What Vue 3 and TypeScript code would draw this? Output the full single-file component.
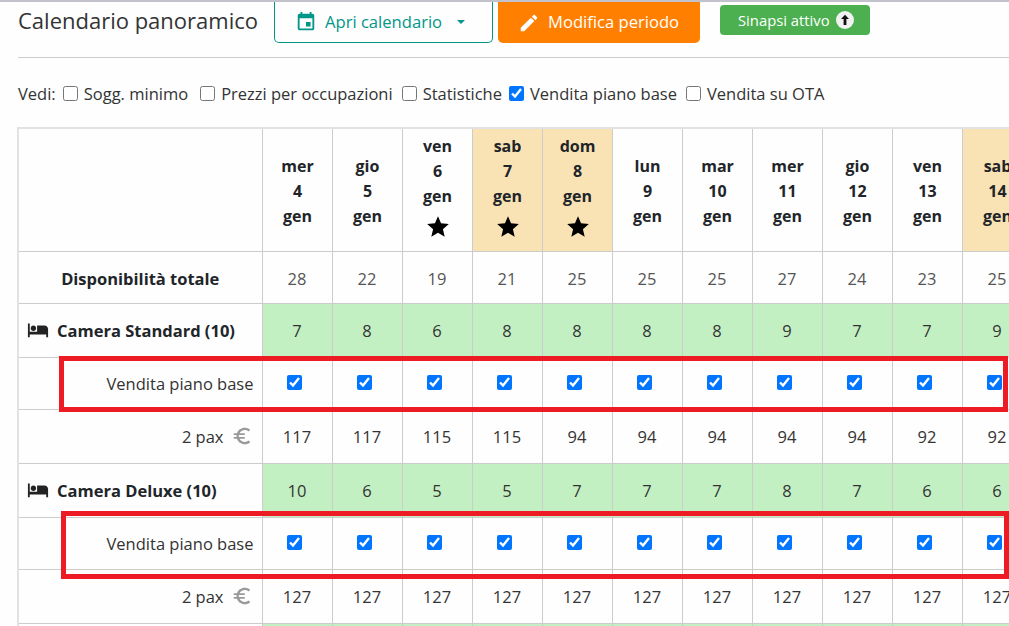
<script setup lang="ts">
interface Day {
  name: string
  num: number
  weekend?: boolean
  star?: boolean
}

interface Room {
  name: string
  avail: number[]
  prices: number[]
}

const days: Day[] = [
  { name: 'mer', num: 4 },
  { name: 'gio', num: 5 },
  { name: 'ven', num: 6, star: true },
  { name: 'sab', num: 7, weekend: true, star: true },
  { name: 'dom', num: 8, weekend: true, star: true },
  { name: 'lun', num: 9 },
  { name: 'mar', num: 10 },
  { name: 'mer', num: 11 },
  { name: 'gio', num: 12 },
  { name: 'ven', num: 13 },
  { name: 'sab', num: 14, weekend: true },
]

const total = [28, 22, 19, 21, 25, 25, 25, 27, 24, 23, 25]

const rooms: Room[] = [
  {
    name: 'Camera Standard (10)',
    avail: [7, 8, 6, 8, 8, 8, 8, 9, 7, 7, 9],
    prices: [117, 117, 115, 115, 94, 94, 94, 94, 94, 92, 92],
  },
  {
    name: 'Camera Deluxe (10)',
    avail: [10, 6, 5, 5, 7, 7, 7, 8, 7, 6, 6],
    prices: [127, 127, 127, 127, 127, 127, 127, 127, 127, 127, 127],
  },
]

const filters = [
  { label: 'Sogg. minimo', on: false },
  { label: 'Prezzi per occupazioni', on: false },
  { label: 'Statistiche', on: false },
  { label: 'Vendita piano base', on: true },
  { label: 'Vendita su OTA', on: false },
]
</script>

<template>
  <div class="page">
    <header class="top">
      <h1 class="title">Calendario panoramico</h1>
      <button class="btn btn-outline" type="button">
        <svg class="ico" viewBox="0 0 24 24"><path d="M17 12h-5v5h5v-5zM16 1v2H8V1H6v2H5c-1.11 0-1.99.9-1.99 2L3 19c0 1.1.89 2 2 2h14c1.1 0 2-.9 2-2V5c0-1.1-.9-2-2-2h-1V1h-2zm3 18H5V8h14v11z" /></svg>
        <span>Apri calendario</span>
        <i class="caret"></i>
      </button>
      <button class="btn btn-orange" type="button">
        <svg class="ico" viewBox="0 0 24 24"><path d="M3 17.25V21h3.75L17.81 9.94l-3.75-3.75L3 17.25zM20.71 7.04c.39-.39.39-1.02 0-1.41l-2.34-2.34c-.39-.39-1.02-.39-1.41 0l-1.83 1.83 3.75 3.75 1.83-1.83z" /></svg>
        <span>Modifica periodo</span>
      </button>
      <button class="btn-sync" type="button">
        <span>Sinapsi attivo</span>
        <svg class="sync-ico" viewBox="0 0 18 18">
          <circle cx="9" cy="9" r="9" fill="#f1f1f1" />
          <path d="M9 3.8 13 8h-2.6v6H7.6V8H5z" fill="#111" />
        </svg>
      </button>
    </header>

    <div class="filters">
      <span class="filters-label">Vedi:</span>
      <label v-for="f in filters" :key="f.label" class="filter">
        <input type="checkbox" :checked="f.on" />
        <span>{{ f.label }}</span>
      </label>
    </div>

    <div class="grid-wrap">
      <table class="grid">
        <colgroup>
          <col class="col-label" />
          <col v-for="d in days" :key="d.num" class="col-day" />
        </colgroup>
        <thead>
          <tr class="row-head">
            <th></th>
            <th v-for="d in days" :key="d.num" :class="{ weekend: d.weekend }">
              <div>{{ d.name }}</div>
              <div>{{ d.num }}</div>
              <div>gen</div>
              <svg v-if="d.star" class="star" viewBox="0 0 24 24"><path d="M12 17.27 18.18 21l-1.64-7.03L22 9.24l-7.19-.61L12 2 9.19 8.63 2 9.24l5.46 4.73L5.82 21z" /></svg>
            </th>
          </tr>
        </thead>
        <tbody>
          <tr class="row-total">
            <th class="center">Disponibilità totale</th>
            <td v-for="(n, i) in total" :key="i">{{ n }}</td>
          </tr>
          <template v-for="room in rooms" :key="room.name">
            <tr class="row-room">
              <th class="room-name">
                <span class="room-inner">
                  <svg class="bed" viewBox="0 0 24 24"><path d="M7 13c1.66 0 3-1.34 3-3S8.66 7 7 7s-3 1.34-3 3 1.34 3 3 3zm12-6h-8v7H3V5H1v15h2v-3h18v3h2v-9c0-2.21-1.79-4-4-4z" /></svg>
                  {{ room.name }}
                </span>
              </th>
              <td v-for="(n, i) in room.avail" :key="i" class="free">{{ n }}</td>
            </tr>
            <tr class="row-check">
              <td class="label">Vendita piano base</td>
              <td v-for="d in days" :key="d.num"><input type="checkbox" checked /></td>
            </tr>
            <tr class="row-price">
              <td class="label">
                <span class="pax">
                  2 pax
                  <svg class="euro" viewBox="0 0 24 24"><path d="M15 18.5c-2.51 0-4.68-1.42-5.76-3.5H15v-2H8.58c-.05-.33-.08-.66-.08-1s.03-.67.08-1H15V9H9.24C10.32 6.92 12.5 5.5 15 5.5c1.61 0 3.09.59 4.23 1.57L21 5.3C19.41 3.87 17.3 3 15 3c-3.92 0-7.24 2.51-8.48 6H3v2h3.06c-.04.33-.06.66-.06 1 0 .34.02.67.06 1H3v2h3.52c1.24 3.49 4.56 6 8.48 6 2.31 0 4.41-.87 6-2.3l-1.78-1.77c-1.13.98-2.6 1.57-4.22 1.57z" /></svg>
                </span>
              </td>
              <td v-for="(n, i) in room.prices" :key="i">{{ n }}</td>
            </tr>
          </template>
          <tr class="row-room">
            <th></th>
            <td v-for="d in days" :key="d.num" class="free"></td>
          </tr>
        </tbody>
      </table>
    </div>

    <div class="mark mark-a"></div>
    <div class="mark mark-b"></div>
  </div>
</template>

<style>
html,
body {
  overflow: hidden;
  background: #fff;
}
</style>

<style scoped>
.page {
  position: relative;
  width: 1009px;
  height: 626px;
  overflow: hidden;
  box-sizing: border-box;
  border-top: 2px solid #c2c2cc;
  background: #fefefe;
  color: #333;
  font-family: "Open Sans", "Noto Sans", "Liberation Sans", sans-serif;
  font-size: 16.5px;
}

.top {
  display: flex;
  align-items: flex-start;
  height: 55px;
  margin-left: 18px;
  border-bottom: 1px solid #ccc;
}

.title {
  width: 256px;
  margin: 3px 0 0;
  font-size: 22px;
  font-weight: 400;
  line-height: 30px;
  white-space: nowrap;
}

.btn {
  display: flex;
  align-items: center;
  box-sizing: border-box;
  height: 41px;
  border: 0;
  border-radius: 0 0 5px 5px;
  font-family: inherit;
  font-size: 16.6px;
  padding: 0;
}

.btn span {
  margin-bottom: 2px;
}

.ico {
  width: 22px;
  height: 22px;
  fill: currentColor;
  flex: none;
}

.btn-outline {
  width: 219px;
  padding-left: 20px;
  border: 1px solid #009688;
  border-top: 0;
  background: transparent;
  color: #009688;
}

.btn-outline span {
  margin-left: 8px;
}

.caret {
  width: 0;
  height: 0;
  margin-left: 15px;
  border: 4px solid transparent;
  border-top-color: #009688;
  border-bottom: 0;
}

.btn-orange {
  width: 202px;
  margin-left: 5px;
  padding-left: 20px;
  background: #ff8000;
  color: #fff;
}

.btn-orange span {
  margin-left: 8px;
}

.btn-sync {
  display: flex;
  align-items: center;
  box-sizing: border-box;
  width: 150px;
  height: 30px;
  margin: 3px 0 0 20px;
  padding: 0 0 0 18px;
  border: 0;
  border-radius: 4px;
  background: #4caf50;
  color: #fff;
  font-family: inherit;
  font-size: 14.8px;
}

.sync-ico {
  width: 18px;
  height: 18px;
  margin-left: 6px;
}

.filters {
  display: flex;
  align-items: center;
  gap: 9px;
  height: 26px;
  margin: 22px 0 21px 18px;
  white-space: nowrap;
}

.filters-label {
  margin-right: -2px;
}

.filter {
  display: flex;
  align-items: center;
  gap: 6px;
}

.filter:nth-of-type(1) {
  margin-right: 3px;
}

.filter:nth-of-type(3) {
  margin-right: -2px;
}

.filter input {
  width: 15px;
  height: 15px;
  margin: 0;
}

.grid-wrap {
  margin-left: 17px;
  width: 992px;
  overflow: hidden;
}

.grid {
  table-layout: fixed;
  width: 1015px;
  border-collapse: collapse;
  border-top: 2px solid #e2e2e2;
  border-left: 2px solid #e2e2e2;
}

.col-label {
  width: 244px;
}

.col-day {
  width: 70px;
}

th,
td {
  padding: 0;
  border: 1px solid #ccc;
  text-align: center;
}

th {
  color: #212529;
  font-weight: 700;
}

.row-head {
  height: 123px;
}

.row-head th {
  padding: 4px 0 0 1px;
  font-size: 16px;
  line-height: 25px;
  vertical-align: middle;
}

.weekend {
  background: #f9e3b5;
}

.star {
  display: block;
  width: 26px;
  height: 26px;
  margin: 5px auto 10px;
  fill: #000;
}

.row-total {
  height: 52px;
}

.row-total th,
.row-total td {
  padding-top: 2px;
}

.row-total td {
  color: #555;
}

.row-room {
  height: 54px;
}

.row-check {
  height: 52px;
}

.row-price {
  height: 54px;
}

.room-name {
  text-align: left;
}

.room-inner {
  display: flex;
  align-items: center;
  gap: 8px;
  padding-left: 8px;
}

.bed {
  width: 22px;
  height: 22px;
  fill: #222;
  flex: none;
}

.free {
  background: #c3f0c3;
}

.label {
  padding-right: 8px;
  text-align: right;
}

.pax {
  display: inline-flex;
  align-items: center;
  gap: 7px;
}

.euro {
  width: 22px;
  height: 22px;
  fill: #999;
  margin-right: 1px;
}

.row-check input {
  width: 15px;
  height: 15px;
  margin: 0 5px 5px 0;
  vertical-align: middle;
}

.mark {
  position: absolute;
  box-sizing: border-box;
  border: 5px solid #ed1c24;
  pointer-events: none;
}

.mark-a {
  left: 59px;
  top: 354px;
  width: 949px;
  height: 56px;
}

.mark-b {
  left: 61px;
  top: 509px;
  width: 948px;
  height: 68px;
}
</style>
